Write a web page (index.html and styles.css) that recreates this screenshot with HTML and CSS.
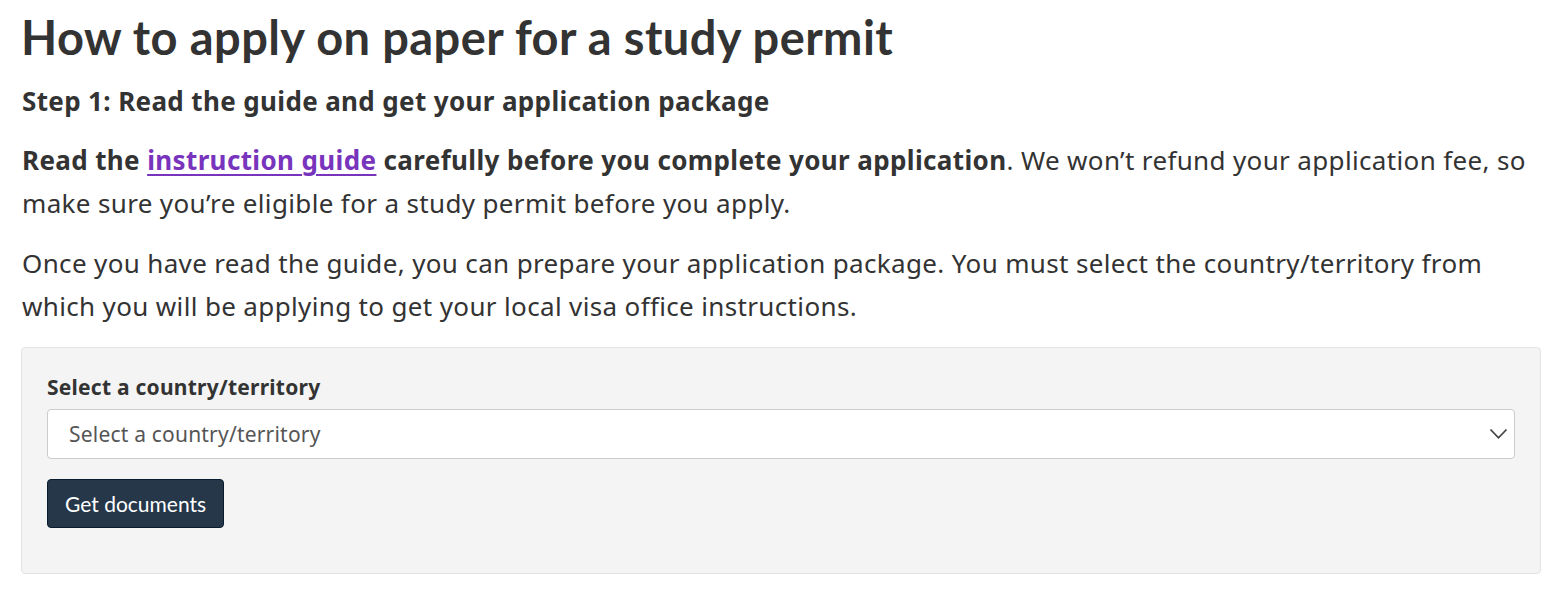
FILE: index.html
```html
<!DOCTYPE html>
<html lang="en">
<head>
<meta charset="utf-8">
<title>How to apply on paper for a study permit</title>
<link rel="stylesheet" href="styles.css">
</head>
<body>
<main class="page">
  <h1 class="title">How to apply on paper for a study permit</h1>
  <h2 class="step">Step 1: Read the guide and get your application package</h2>
  <p class="text"><strong>Read the</strong> <a href="#" class="link">instruction guide</a> <strong>carefully before you complete your application</strong>. We won’t refund your application fee, so make sure you’re eligible for a study permit before you apply.</p>
  <p class="text">Once you have read the guide, you can prepare your application package. You must select the country/territory from which you will be applying to get your local visa office instructions.</p>
  <form class="panel">
    <label class="label" for="country">Select a country/territory</label>
    <div class="select-wrap">
      <select id="country" class="select">
        <option>Select a country/territory</option>
      </select>
      <svg class="chev" width="19" height="12" viewBox="0 0 19 12"><path d="M1.5 1.5 L9.5 9.8 L17.5 1.5" fill="none" stroke="#444" stroke-width="1.8"/></svg>
    </div>
    <button type="button" class="btn">Get documents</button>
  </form>
</main>
</body>
</html>
```
FILE: styles.css
```css
html, body { margin: 0; padding: 0; background: #fff; }
body { font-family: "Noto Sans", sans-serif; color: #333; }
.page { padding: 0 22px 0 21px; }
.title {
  font-family: Lato, sans-serif;
  font-weight: 700;
  font-size: 47px;
  letter-spacing: 0.4px;
  line-height: 1.2;
  margin: 0;
  padding-top: 9px;
  color: #333;
}
.step {
  font-size: 26px;
  font-weight: 700;
  letter-spacing: 0.36px;
  margin: 19px 0 0 1px;
  line-height: 34px;
}
.text {
  font-size: 26px;
  line-height: 43px;
  letter-spacing: 0.35px;
  margin: 21px 0 0 1px;
}
.text + .text { margin-top: 17px; }
.text strong { font-weight: 700; letter-spacing: 0.37px; }
.link {
  color: #7834bc;
  font-weight: 700;
  letter-spacing: 0.37px;
  text-decoration: underline;
  text-decoration-thickness: 2px;
  text-underline-offset: 4px;
}
.panel {
  margin-top: 19px;
  background: #f4f4f4;
  border: 1px solid #e3e3e3;
  border-radius: 4px;
  padding: 24px 25px 45px 25px;
  display: flex;
  flex-direction: column;
  align-items: flex-start;
}
.label { font-size: 21px; font-weight: 700; letter-spacing: 0.24px; line-height: 30px; margin-bottom: 7px; }
.select-wrap { position: relative; width: 100%; }
.select {
  appearance: none;
  width: 100%;
  height: 50px;
  background: #fff;
  border: 1px solid #ccc;
  border-radius: 4px;
  font-family: "Noto Sans", sans-serif;
  font-size: 21px;
  letter-spacing: 0.2px;
  color: #555;
  padding: 0 21px;
  display: block;
}
.chev { position: absolute; right: 7px; top: 19px; pointer-events: none; }
.btn {
  margin-top: 20px;
  background: #26374a;
  color: #fff;
  border: 1px solid #091c2d;
  border-radius: 4px;
  font-family: Lato, sans-serif;
  font-size: 21px;
  height: 49px;
  padding: 0 17px;
}
```
